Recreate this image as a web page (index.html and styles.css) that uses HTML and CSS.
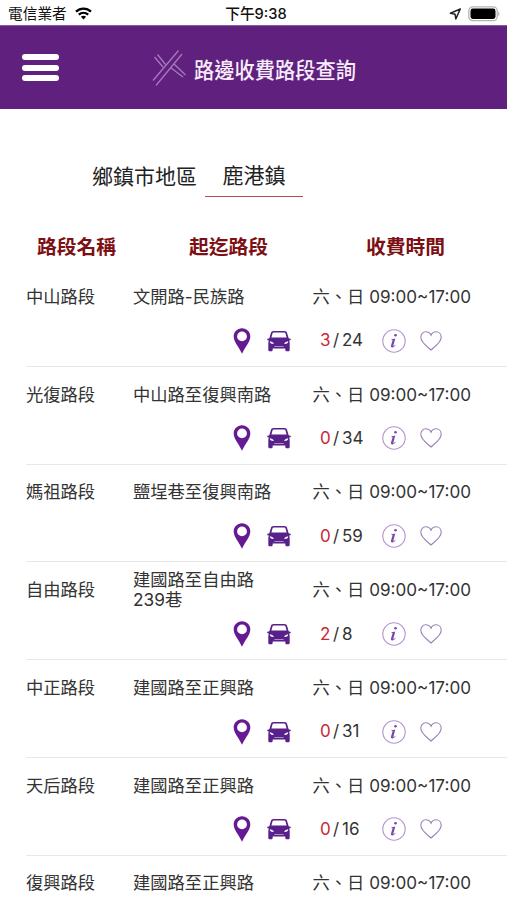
FILE: index.html
```html
<!DOCTYPE html>
<html lang="zh-Hant">
<head>
    <meta charset="UTF-8">
    <meta name="viewport" content="width=device-width, initial-scale=1.0">
    <title>路邊收費路段查詢</title>
    <link rel="stylesheet" href="styles.css">
</head>
<body>
    <!-- shared row icons -->
    <svg class="symbols" width="0" height="0">
        <symbol id="pin" viewBox="0 0 18 26">
            <path fill-rule="evenodd" d="M9 .3C4.300 .3.700 3.900.700 8.500c0 5.200 5 10.300 8.300 17.200 3.300-6.900 8.300-12 8.300-17.200C17.300 3.900 13.700.3 9 .3zM9 3.500a4.900 4.900 0 1 1 0 9.800 4.900 4.900 0 0 1 0-9.800z" fill="#651a93"/>
        </symbol>
        <symbol id="car" viewBox="0 0 24 22">
            <path fill-rule="evenodd" d="M6.500 1h11c1.300 0 2.200.7 2.600 1.900L21.600 8l.6.700.3-.1c.8-.1 1.300.2 1.300.8 0 .8-.8 1.100-1.800 1.100.5.800.7 1.700.7 2.900v6.100c0 1.300-.5 1.800-1.600 1.800h-1.200c-1.100 0-1.600-.5-1.600-1.800v-.9H5.700v.9c0 1.300-.5 1.800-1.600 1.800H2.900c-1.100 0-1.600-.5-1.600-1.800v-6.100c0-1.200.2-2.100.7-2.900-1 0-1.800-.3-1.800-1.100 0-.6.500-.9 1.300-.8l.3.100.6-.7 1.500-5.100C4.300 1.700 5.200 1 6.500 1zm.3 1.500c-.7 0-1.100.3-1.300.9L4.400 7.600h15.200l-1.100-4.200c-.2-.6-.6-.9-1.300-.9zM2.900 11.200c-.2 1.700.8 2.600 3.900 2.700-.3-1.500-1.500-2.300-3.900-2.700zm18.200 0c-2.400.4-3.600 1.200-3.900 2.700 3.100-.1 4.100-1 3.900-2.700zM7.500 15.900l-.3.600h9.600l-.3-.6z" fill="#58208a"/>
        </symbol>
        <symbol id="info" viewBox="0 0 24 24">
            <circle cx="12" cy="12" r="11.200" fill="none" stroke="#b493d2" stroke-width="1.100"/>
            <circle cx="13.500" cy="6.300" r="1.300" fill="#7a47ad"/>
            <path d="M9.300 10.300c1.300 0 2.500-.3 4-.8l-1.900 7.100c-.1.600.3.700.7.300l1.100-1.200.5.400c-1.100 1.600-2.200 2.400-3.400 2.400-1.100 0-1.600-.7-1.300-1.900l1.500-5.100c.1-.5-.1-.7-1.300-.7z" fill="#7a47ad"/>
        </symbol>
        <symbol id="heart" viewBox="0 0 22 20">
            <path d="M11 19C7.500 15.600.8 11.700.8 6.300.8 3.100 3 .8 5.800.8 8 .8 10 2 11 4.200 12 2 14 .8 16.200.8c2.800 0 5 2.300 5 5.500C21.200 11.700 14.500 15.600 11 19z" fill="none" stroke="#9f80b5" stroke-width="1.100"/>
        </symbol>
    </svg>

    <div class="status-bar">
        <div class="carrier">
            <span>電信業者</span>
            <svg width="17" height="13" viewBox="0 0 17 13" fill="none" stroke="#000" stroke-width="2.300">
                <path d="M1 4.700c4.300-4.100 10.700-4.100 15 0M3.800 7.700c2.700-2.500 6.700-2.500 9.400 0"/>
                <path d="M8.500 12.400 5.900 9.700c1.500-1.300 3.700-1.300 5.200 0z" fill="#000" stroke="none"/>
            </svg>
        </div>
        <div class="clock">下午9:38</div>
        <div class="indicators">
            <svg width="13" height="12" viewBox="0 0 13 12" fill="none" stroke="#222" stroke-width="1.500" stroke-linejoin="round">
                <path d="M11.300 1 1.400 5.300l4.700 1 .7 4.600z"/>
            </svg>
            <svg width="32" height="16" viewBox="0 0 32 16">
                <rect x=".8" y=".8" width="28.400" height="13.900" rx="4" fill="#fff" stroke="#b5b5b5" stroke-width="1.300"/>
                <rect x="2.500" y="2.600" width="25" height="10.300" rx="2.300" fill="#000"/>
                <path d="M30.300 5.500c1.500.8 1.500 3.900 0 4.700z" fill="#aaa"/>
            </svg>
        </div>
    </div>

    <header class="header">
        <div class="menu">
            <span></span>
            <span></span>
            <span></span>
        </div>
        <svg class="logo" width="36" height="38" viewBox="0 0 36 38" fill="none" stroke="#a878c2" stroke-width="1.300">
            <path d="M1 31.500 26.500 1.500M4 36.500 30 5M2.500 8l8.500 10M5.500 5.500l8 10M18.500 18.500l12.500 9.500M21.500 14.500l12 11.500"/>
        </svg>
        <h1 class="title">路邊收費路段查詢</h1>
    </header>

    <div class="filter">
        <span class="filter-label">鄉鎮市地區</span>
        <span class="filter-value">鹿港鎮</span>
    </div>

    <div class="columns">
        <span>路段名稱</span>
        <span>起迄路段</span>
        <span>收費時間</span>
    </div>

    <div class="list">
        <div class="row">
            <div class="info">
                <span>中山路段</span>
                <span class="route">文開路-民族路</span>
                <span class="time">六、日 <b>09:00~17:00</b></span>
            </div>
            <div class="actions">
                <svg class="pin"><use href="#pin"/></svg>
                <svg class="car"><use href="#car"/></svg>
                <span class="count"><em>3</em><i>/</i>24</span>
                <svg class="detail"><use href="#info"/></svg>
                <svg class="heart"><use href="#heart"/></svg>
            </div>
        </div>
        <div class="row">
            <div class="info">
                <span>光復路段</span>
                <span class="route">中山路至復興南路</span>
                <span class="time">六、日 <b>09:00~17:00</b></span>
            </div>
            <div class="actions">
                <svg class="pin"><use href="#pin"/></svg>
                <svg class="car"><use href="#car"/></svg>
                <span class="count"><em>0</em><i>/</i>34</span>
                <svg class="detail"><use href="#info"/></svg>
                <svg class="heart"><use href="#heart"/></svg>
            </div>
        </div>
        <div class="row">
            <div class="info">
                <span>媽祖路段</span>
                <span class="route">鹽埕巷至復興南路</span>
                <span class="time">六、日 <b>09:00~17:00</b></span>
            </div>
            <div class="actions">
                <svg class="pin"><use href="#pin"/></svg>
                <svg class="car"><use href="#car"/></svg>
                <span class="count"><em>0</em><i>/</i>59</span>
                <svg class="detail"><use href="#info"/></svg>
                <svg class="heart"><use href="#heart"/></svg>
            </div>
        </div>
        <div class="row">
            <div class="info">
                <span>自由路段</span>
                <span class="route">建國路至自由路<br>239巷</span>
                <span class="time">六、日 <b>09:00~17:00</b></span>
            </div>
            <div class="actions">
                <svg class="pin"><use href="#pin"/></svg>
                <svg class="car"><use href="#car"/></svg>
                <span class="count"><em>2</em><i>/</i>8</span>
                <svg class="detail"><use href="#info"/></svg>
                <svg class="heart"><use href="#heart"/></svg>
            </div>
        </div>
        <div class="row">
            <div class="info">
                <span>中正路段</span>
                <span class="route">建國路至正興路</span>
                <span class="time">六、日 <b>09:00~17:00</b></span>
            </div>
            <div class="actions">
                <svg class="pin"><use href="#pin"/></svg>
                <svg class="car"><use href="#car"/></svg>
                <span class="count"><em>0</em><i>/</i>31</span>
                <svg class="detail"><use href="#info"/></svg>
                <svg class="heart"><use href="#heart"/></svg>
            </div>
        </div>
        <div class="row">
            <div class="info">
                <span>天后路段</span>
                <span class="route">建國路至正興路</span>
                <span class="time">六、日 <b>09:00~17:00</b></span>
            </div>
            <div class="actions">
                <svg class="pin"><use href="#pin"/></svg>
                <svg class="car"><use href="#car"/></svg>
                <span class="count"><em>0</em><i>/</i>16</span>
                <svg class="detail"><use href="#info"/></svg>
                <svg class="heart"><use href="#heart"/></svg>
            </div>
        </div>
        <div class="row last">
            <div class="info">
                <span>復興路段</span>
                <span class="route">建國路至正興路</span>
                <span class="time">六、日 <b>09:00~17:00</b></span>
            </div>
        </div>
    </div>
</body>
</html>
```
FILE: styles.css
```css
* {
    box-sizing: border-box;
}
body {
    margin: 0;
    height: 900px;
    overflow: hidden;
    display: flex;
    flex-direction: column;
    background-color: #fff;
    color: #333;
    font-family: Inter, "Noto Sans CJK TC", sans-serif;
}
svg {
    display: block;
    flex: none;
}
.symbols {
    position: absolute;
}

/* status bar */
.status-bar {
    flex: none;
    height: 25px;
    padding: 2px 7px 0 8px;
    display: grid;
    grid-template-columns: 1fr auto 1fr;
    align-items: center;
    color: #111;
    font-size: 14.700px;
    line-height: 22px;
}
.carrier {
    display: flex;
    align-items: center;
    gap: 8px;
}
.clock {
    padding-left: 4px;
    font-weight: 500;
}
.indicators {
    display: flex;
    justify-content: flex-end;
    align-items: center;
    gap: 6px;
}

/* purple header */
.header {
    flex: none;
    height: 84px;
    padding-left: 22px;
    display: flex;
    align-items: center;
    background-color: #5f217d;
    border-top: 1px solid #8b5aa3;
}
.menu {
    width: 37px;
    display: flex;
    flex-direction: column;
    gap: 4.500px;
}
.menu span {
    height: 6px;
    border-radius: 3px;
    background-color: #fff;
}
.logo {
    margin-left: 93px;
}
.title {
    margin: 4px 0 0 6px;
    color: #f6ecfa;
    font-size: 22px;
    font-weight: 500;
    line-height: 30px;
    white-space: nowrap;
    transform: scaleX(0.920);
    transform-origin: left;
}

/* district picker */
.filter {
    flex: none;
    height: 88px;
    padding-left: 92px;
    display: flex;
    align-items: flex-end;
    font-size: 21px;
    line-height: 40px;
    color: #222;
}
.filter-value {
    margin-left: 8px;
    width: 98px;
    text-align: center;
    border-bottom: 1.500px solid #b84a55;
}

.columns {
    flex: none;
    height: 72px;
    padding: 35px 0 0 37px;
    display: grid;
    grid-template-columns: 152px 177px 1fr;
    color: #7d1014;
    font-size: 19.800px;
    font-weight: 600;
    line-height: 30px;
}

/* road list */
.list {
    flex: 1;
    min-height: 0;
    padding-left: 26px;
    font-size: 17.300px;
    line-height: 20.500px;
}
.row {
    height: 97.750px;
    border-bottom: 1px solid #e8e8e8;
}
.row.last {
    height: auto;
    border-bottom: none;
}
.info {
    height: 56px;
    display: grid;
    grid-template-columns: 107px 179.500px 1fr;
    align-items: center;
}
.row.last .info {
    height: 45px;
    padding-top: 11px;
}
.time {
    white-space: nowrap;
}
.time b {
    font-weight: 400;
    font-size: 17.100px;
}
.actions {
    height: 31px;
    padding-left: 207px;
    display: flex;
    align-items: center;
}
.pin {
    width: 18px;
    height: 26px;
}
.car {
    width: 24px;
    height: 22px;
    margin-left: 16px;
}
.count {
    width: 62px;
    margin-left: 29px;
    font-size: 17px;
}
.count em {
    display: inline-block;
    width: 13px;
    color: #c8283c;
    font-style: normal;
}
.count i {
    display: inline-block;
    width: 9px;
    font-style: normal;
}
.detail {
    width: 24px;
    height: 24px;
}
.heart {
    width: 22px;
    height: 20px;
    margin-left: 14px;
}
```
